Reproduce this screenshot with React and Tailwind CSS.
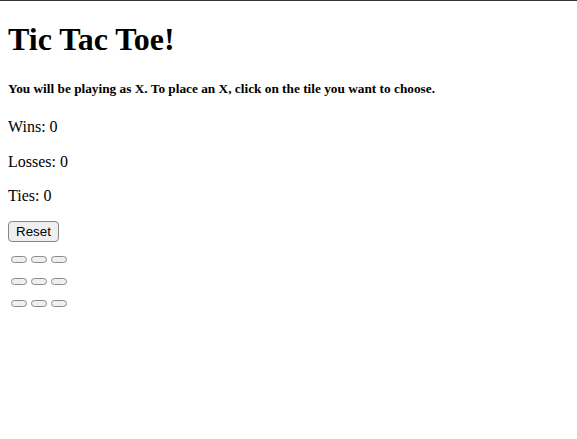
export default function App() {
  const rows = [0, 1, 2];
  return (
    <div className="min-h-[439px] w-[577px] bg-white border-t border-[#333] text-black" style={{ fontFamily: '"Liberation Serif", "Times New Roman", serif' }}>
      <div className="px-2">
        <h1 className="text-[32px] font-bold leading-[37px] pt-[20px] mb-[23px]">Tic Tac Toe!</h1>
        <h5 className="text-[13.3px] font-bold leading-[16px] mb-[21px]">You will be playing as X. To place an X, click on the tile you want to choose.</h5>
        <p className="text-[16px] leading-[18px] mb-[16.5px]">Wins: 0</p>
        <p className="text-[16px] leading-[18px] mb-[16.5px]">Losses: 0</p>
        <p className="text-[16px] leading-[18px] mb-[16px]">Ties: 0</p>
        <button className="block h-[21px] w-[51px] rounded-[4px] border border-[#858585] bg-[#efefef] text-[13.33px] leading-[19px] text-black" style={{ fontFamily: '"Liberation Sans", Arial, sans-serif' }}>Reset</button>
        <div className="mt-[14px] flex flex-col gap-[15px] pl-[3px]">
          {rows.map((r) => (
            <div key={r} className="flex gap-[4px]">
              {[0, 1, 2].map((c) => (
                <button key={c} className="block h-[7px] w-[16px] rounded-full border border-[#8a8a8a] bg-[#efefef]" />
              ))}
            </div>
          ))}
        </div>
      </div>
    </div>
  );
}
